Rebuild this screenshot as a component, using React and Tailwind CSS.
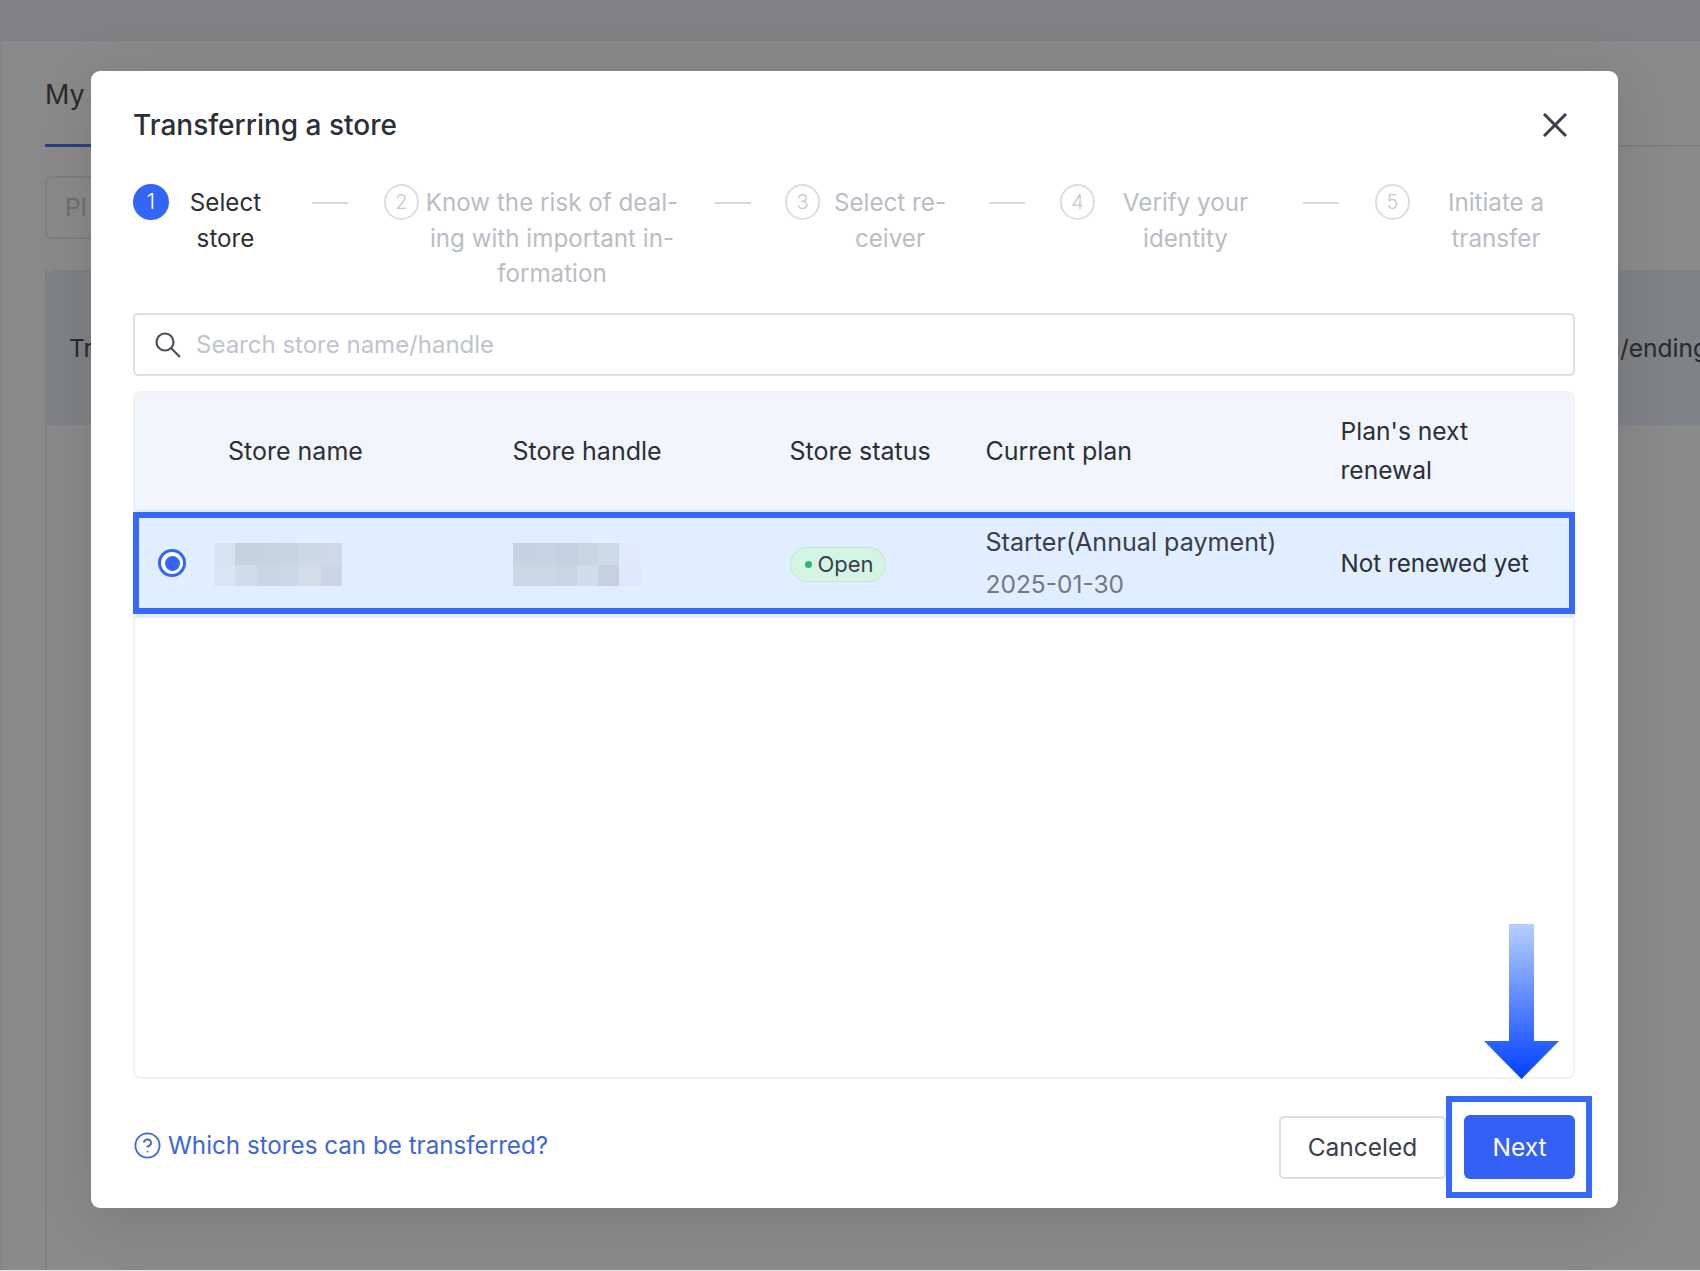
import React from "react";
import { CircleHelp } from "lucide-react";

const font = "font-['Inter','Liberation_Sans',sans-serif]";

function Dash({ cls }) {
  return <div className={`h-[2px] w-[36px] shrink-0 mt-[17px] bg-[#d5d7dc] ${cls}`} />;
}

function Step({ n, active, width, lines }) {
  return (
    <div className="flex shrink-0">
      <div
        className={
          active
            ? "-mt-[1px] flex h-[36px] w-[36px] shrink-0 items-center justify-center rounded-full bg-[#3366f6] text-[21px] font-light text-white"
            : "-mt-[1px] flex h-[36px] w-[35px] shrink-0 items-center justify-center rounded-full border-2 border-[#dcdee3] text-[20px] font-light text-[#c6c9d0]"
        }
      >
        {n}
      </div>
      <div
        className={`text-center text-[24.2px] leading-[35.5px] ${
          active ? "text-[#2b2f38]" : "text-[#b9bdc6]"
        }`}
        style={{ width }}
      >
        {lines.map((l) => (
          <div key={l} className="whitespace-nowrap">
            {l}
          </div>
        ))}
      </div>
    </div>
  );
}

function Mosaic({ rows }) {
  return (
    <div className="grid h-[43px] w-[128px] grid-cols-6 grid-rows-2">
      {rows}
    </div>
  );
}

export default function App() {
  return (
    <div className={`relative flex h-[1271px] w-[1700px] flex-col overflow-hidden bg-[#8a8a8a] ${font}`}>
      {/* dimmed page behind the dialog */}
      <div className="h-[41px] shrink-0 bg-[#808184]" />
      <div className="min-h-0 flex-1 border-l-2 border-[#848587] pl-[43px]">
        <div className="flex h-[106px] items-end border-b-2 border-[#7e7e7e]">
          <div className="mb-[-2px] h-[106px] w-[60px] border-b-[3px] border-[#2c3f82] pt-[33px] text-[27px] leading-[42px] text-[#2a2a2a]">
            My
          </div>
        </div>
        <div className="mt-[29px] flex h-[63px] w-[400px] items-center rounded-l-[6px] border-2 border-r-0 border-[#7e7e7e] pl-[18px] text-[24.5px] text-[#6f6f6f]">
          Pl
        </div>
        <div className="mt-[31px] h-[1000px] border-l-2 border-[#808080]">
          <div className="flex h-[155px] items-center justify-between overflow-hidden rounded-tl-[8px] bg-[#7f8286] pl-[22px] pt-[2px] text-[24.5px] text-[#2a2a2a]">
            <span>Tr</span>
            <span className="-mr-[8px] whitespace-nowrap">/ending</span>
          </div>
        </div>
      </div>
      <div className="h-[1px] shrink-0 bg-[#e8e8e8]" />

      {/* dialog */}
      <div className="absolute left-[91px] top-[71px] flex h-[1137px] w-[1527px] flex-col rounded-[9px] bg-white pb-[29px] pl-[42px] pr-[43px] pt-[34px] shadow-[0_10px_60px_rgba(0,0,0,0.12)]">
        <div className="flex h-[40px] items-center justify-between">
          <div className="text-[28px] font-medium text-[#2b2f38]">Transferring a store</div>
          <svg viewBox="0 0 24 24" className="mr-[8px] h-[24px] w-[24px] text-[#3a3f4a]" fill="none" stroke="currentColor" strokeWidth="3">
            <path d="M1 1 L23 23 M23 1 L1 23" />
          </svg>
        </div>

        <div className="mt-[40px] flex h-[107px]">
          <Step n="1" active width={113} lines={["Select", "store"]} />
          <Dash cls="ml-[30px] mr-[36px]" />
          <Step n="2" width={266} lines={["Know the risk of deal-", "ing with important in-", "formation"]} />
          <Dash cls="ml-[30px] mr-[34px]" />
          <Step n="3" width={140} lines={["Select re-", "ceiver"]} />
          <Dash cls="ml-[29px] mr-[35px]" />
          <Step n="4" width={181} lines={["Verify your", "identity"]} />
          <Dash cls="ml-[27px] mr-[36px]" />
          <Step n="5" width={172} lines={["Initiate a", "transfer"]} />
        </div>

        <div className="mt-[21px] flex h-[63px] shrink-0 items-center rounded-[5px] border-2 border-[#dcdfe5] pl-[20px]">
          <svg viewBox="0 0 26 26" className="h-[26px] w-[26px] text-[#4a4f5a]" fill="none" stroke="currentColor" strokeWidth="2.2">
            <circle cx="10" cy="10" r="8.5" />
            <path d="M16 16 L25 25" />
          </svg>
          <span className="ml-[15px] text-[24px] text-[#c0c4cc]">Search store name/handle</span>
        </div>

        <div className="relative mt-[15px] min-h-0 flex-1 rounded-[8px] border-2 border-[#f0f1f5]">
          <div className="grid h-[116px] grid-cols-[284.5px_277px_196px_355px_1fr] items-center rounded-t-[7px] bg-[#f2f5fb] pl-[93px] text-[25px] leading-[39px] text-[#2b2f38]">
            <div>Store name</div>
            <div>Store handle</div>
            <div>Store status</div>
            <div>Current plan</div>
            <div className="text-[24.6px]">
              Plan's next
              <br />
              renewal
            </div>
          </div>
          <div className="grid h-[109px] grid-cols-[284.5px_277px_196px_355px_1fr] items-center bg-[#e0eeff] pl-[93px] pt-[2px] text-[24.5px] text-[#2b2f38]">
            <div className="relative">
              <div className="absolute -left-[70px] top-[6px] flex h-[28px] w-[28px] items-center justify-center rounded-full border-[3px] border-[#3366f6] bg-white">
                <div className="h-[15px] w-[15px] rounded-full bg-[#3366f6]" />
              </div>
              <div className="-ml-[14px]">
                <Mosaic
                  rows={
                    <>
                      <div className="bg-[#d7e4f1]" />
                      <div className="bg-[#c5d2e0]" />
                      <div className="bg-[#c6d3e1]" />
                      <div className="bg-[#c7d4e2]" />
                      <div className="bg-[#cbd8e6]" />
                      <div className="bg-[#cdd9e7]" />
                      <div className="bg-[#d8e5f2]" />
                      <div className="bg-[#cfdce9]" />
                      <div className="bg-[#c9d6e4]" />
                      <div className="bg-[#cbd8e6]" />
                      <div className="bg-[#d1dee9]" />
                      <div className="bg-[#c9d5e3]" />
                    </>
                  }
                />
              </div>
            </div>
            <div>
              <Mosaic
                rows={
                  <>
                    <div className="bg-[#c5d2e1]" />
                    <div className="bg-[#c6d3e2]" />
                    <div className="bg-[#c4d1e1]" />
                    <div className="bg-[#c8d5e3]" />
                    <div className="bg-[#cddae7]" />
                    <div className="bg-[#dfeafa]" />
                    <div className="bg-[#cad7e5]" />
                    <div className="bg-[#cbd8e6]" />
                    <div className="bg-[#c8d5e3]" />
                    <div className="bg-[#cfdce9]" />
                    <div className="bg-[#c5d1df]" />
                    <div className="bg-[#deeaf9]" />
                  </>
                }
              />
            </div>
            <div>
              <div className="flex h-[35px] w-[96px] items-center rounded-full border border-[#bfe9d2] bg-[#d5f5e4] pl-[14px] text-[22px] text-[#3a3f4a]">
                <span className="mr-[6px] h-[7px] w-[7px] rounded-full bg-[#2fb57a]" />
                Open
              </div>
            </div>
            <div className="-mt-[4px] leading-[42px]">
              <div className="text-[25.1px] text-[#3a3f4a]">Starter(Annual payment)</div>
              <div className="text-[#737883]">2025-01-30</div>
            </div>
            <div className="text-[24.2px]">Not renewed yet</div>
          </div>
          {/* annotation over the selected row */}
          <div className="absolute -inset-x-[2px] top-[119px] h-[102px] border-[6px] border-[#3669fb]" />
        </div>

        <div className="mt-[36px] flex h-[64px] shrink-0 items-center justify-between">
          <div className="-mt-[2px] flex items-center text-[24.2px] text-[#3e67d6]">
            <CircleHelp size={29} strokeWidth={1.5} />
            <span className="ml-[6px]">Which stores can be transferred?</span>
          </div>
          <div className="flex items-center">
            <div className="flex h-[63px] w-[167px] items-center justify-center rounded-[5px] border-2 border-[#dcdee3] text-[24.5px] text-[#3a3f4a]">
              Canceled
            </div>
            <div className="ml-[18px] flex h-[64px] w-[111px] items-center justify-center rounded-[6px] bg-[#3361f6] text-[24.5px] text-white">
              Next
            </div>
          </div>
        </div>

        {/* annotations over the Next button */}
        <div className="absolute left-[1355px] top-[1025px] h-[102px] w-[146px] border-[6px] border-[#3669fb]" />
        <svg className="absolute left-[1393px] top-[853px] h-[155px] w-[75px]" viewBox="0 0 75 155">
          <defs>
            <linearGradient id="arrowFill" x1="0" y1="0" x2="0" y2="1">
              <stop offset="0" stopColor="#b7cffe" />
              <stop offset="1" stopColor="#0040ff" />
            </linearGradient>
          </defs>
          <path d="M25 0 H50 V117 H75 L37.5 155 L0 117 H25 Z" fill="url(#arrowFill)" />
        </svg>
      </div>
    </div>
  );
}
